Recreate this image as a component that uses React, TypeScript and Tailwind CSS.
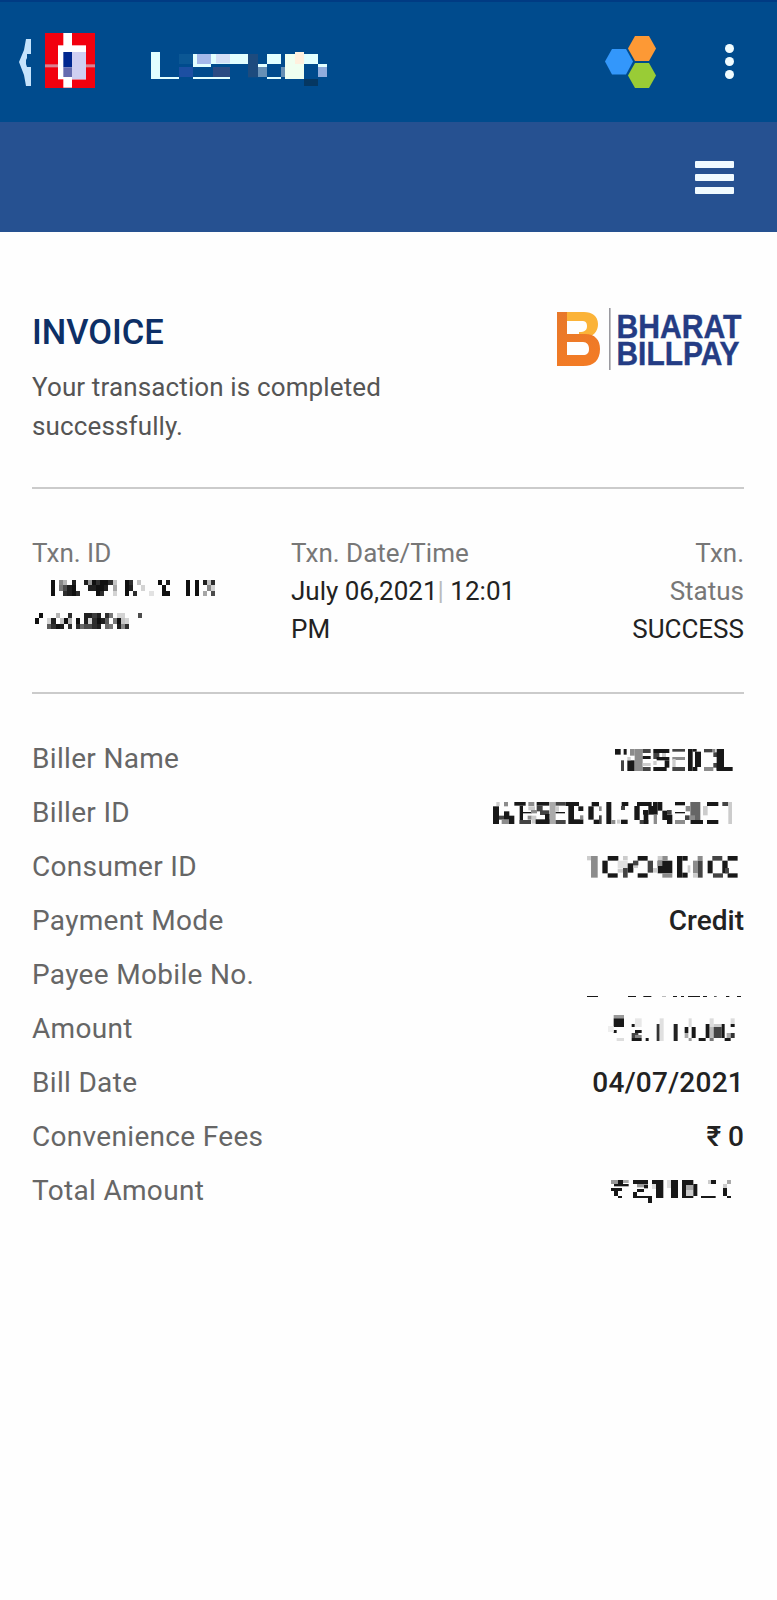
type Rect = [number, number, number, number, string];

function Blocks({ x, y, w, h, rects, className }: { x: number; y: number; w: number; h: number; rects: Rect[]; className?: string }) {
  return (
    <svg width={w / 3} height={h / 3} viewBox={`${x} ${y} ${w} ${h}`} className={className} aria-hidden="true">
      {rects.map(([rx, ry, rw, rh, c], i) => (
        <rect key={i} x={rx} y={ry} width={rw} height={rh} fill={c} />
      ))}
    </svg>
  );
}

/* Each character is one cell: a hex digit is a grey level, a dot is empty. */
function Mosaic({ rows, cw, ch, className }: { rows: string[]; cw: number; ch: number; className?: string }) {
  const cols = Math.max(...rows.map((r) => r.length));
  return (
    <svg width={cols * cw} height={rows.length * ch} className={className} shapeRendering="crispEdges" aria-hidden="true">
      {rows.flatMap((r, j) =>
        r.split("").map((c, i) => {
          if (c === ".") return null;
          const v = 16 + parseInt(c, 16) * 15;
          return <rect key={`${j}-${i}`} x={i * cw} y={j * ch} width={cw} height={ch} fill={`rgb(${v},${v},${v})`} />;
        })
      )}
    </svg>
  );
}

const K = "#181818";
const D = "#444444";
const M = "#8c8c8c";
const L = "#cccccc";
const W = "#e2ffff";

const bankRects: Rect[] = [
  [135, 98, 150, 166, "#f2000e"],
  [135, 192, 150, 9, "#d98291"],
  [190, 98, 26, 164, "#ffffff"],
  [174, 135, 84, 102, "#ffffff"],
  [190, 155, 26, 46, "#00278f"],
  [190, 201, 26, 29, "#656bb0"],
  [216, 155, 42, 82, "#cfcff2"],
];

const titleRects: Rect[] = [
  [453, 156, 27, 81, W],
  [480, 231, 57, 6, W],
  [537, 162, 42, 30, "#0b5794"],
  [537, 201, 42, 30, "#1c4fa2"],
  [579, 162, 165, 30, W],
  [591, 162, 42, 30, "#a5b9ea"],
  [648, 162, 42, 28, "#d5e0f7"],
  [579, 192, 54, 9, W],
  [639, 201, 51, 30, "#2b4b83"],
  [579, 231, 111, 6, W],
  [744, 162, 30, 70, "#1d4b7e"],
  [801, 162, 42, 30, W],
  [774, 192, 27, 9, W],
  [774, 201, 27, 30, "#6790b5"],
  [801, 231, 42, 6, W],
  [843, 201, 12, 30, "#6790b5"],
  [855, 162, 57, 75, "#effff0"],
  [885, 156, 27, 36, "#fff0de"],
  [912, 162, 42, 30, W],
  [954, 192, 27, 9, W],
  [954, 201, 27, 30, "#91acdc"],
  [912, 237, 42, 21, "#053762"],
];

const nameRects: Rect[] = [
  [15, 18, 17, 17, K], [41, 18, 9, 17, K], [60, 18, 14, 20, M], [33, 52, 9, 32, D], [52, 52, 22, 32, K], [52, 42, 10, 10, L],
  [74, 18, 24, 66, M], [98, 18, 24, 12, D], [98, 39, 24, 9, K], [98, 60, 24, 9, L], [98, 72, 24, 12, D],
  [130, 18, 48, 12, K], [130, 30, 18, 18, D], [140, 42, 38, 10, K], [164, 52, 14, 22, K], [130, 72, 40, 12, K], [130, 54, 10, 12, L], [156, 30, 12, 12, L],
  [187, 18, 38, 8, D], [187, 42, 38, 9, M], [187, 72, 38, 12, D], [187, 48, 10, 24, L],
  [234, 18, 14, 66, K], [248, 18, 12, 8, K], [255, 26, 18, 46, K], [248, 72, 14, 12, K],
  [282, 18, 24, 10, D], [306, 18, 10, 10, M], [282, 72, 28, 12, M], [310, 28, 12, 14, D], [310, 60, 12, 14, D],
  [320, 18, 22, 64, K], [320, 72, 48, 12, K],
];

const idRects: Rect[] = [
  [14, 27, 18, 53, K], [32, 55, 15, 12, D], [47, 14, 12, 13, M], [47, 42, 16, 25, K], [40, 67, 22, 13, M], [62, 55, 16, 25, K], [24, 14, 10, 12, L],
  [78, 14, 34, 11, K], [94, 25, 10, 55, K], [104, 44, 26, 4, K], [120, 14, 18, 12, M], [120, 27, 20, 12, L], [118, 55, 12, 12, M], [94, 68, 34, 12, D], [130, 55, 14, 24, L],
  [145, 14, 38, 11, K], [145, 25, 18, 17, D], [155, 39, 28, 14, D], [170, 50, 14, 30, K], [142, 66, 42, 14, K], [128, 38, 18, 10, M],
  [184, 14, 18, 66, "#aaaaaa"], [202, 14, 30, 11, D], [202, 44, 28, 4, K], [202, 68, 30, 12, D], [202, 27, 10, 16, L],
  [232, 14, 40, 12, K], [240, 26, 17, 54, K], [257, 66, 28, 14, K], [270, 27, 15, 14, K], [275, 54, 10, 12, M],
  [310, 14, 22, 13, K], [300, 27, 16, 40, K], [316, 67, 20, 13, K], [332, 27, 8, 14, M], [332, 54, 8, 26, D],
  [354, 14, 15, 66, K], [369, 68, 12, 12, M],
  [400, 14, 20, 12, K], [398, 26, 12, 12, D], [386, 67, 10, 12, L], [398, 67, 20, 13, K],
  [446, 14, 44, 12, K], [438, 26, 16, 42, K], [454, 68, 26, 12, D], [464, 38, 16, 14, K], [480, 26, 14, 26, K], [466, 50, 14, 30, K],
  [494, 14, 14, 38, K], [508, 14, 14, 26, K], [496, 52, 10, 28, M], [522, 40, 14, 28, K], [536, 52, 16, 28, K], [536, 38, 14, 14, D],
  [560, 14, 30, 10, K], [560, 44, 30, 4, K], [560, 68, 30, 12, M], [590, 54, 14, 14, D],
  [606, 14, 30, 66, "#666666"], [592, 26, 14, 16, M], [606, 54, 14, 14, M], [608, 68, 36, 12, K],
  [656, 14, 34, 12, K], [644, 26, 14, 28, L], [656, 68, 34, 12, K],
  [702, 14, 18, 12, D], [720, 14, 12, 66, L],
];

const consumerRects: Rect[] = [
  [-62, 178, 12, 13, L], [-50, 178, 20, 65, M],
  [0, 178, 32, 14, K], [-16, 192, 16, 38, K], [0, 230, 30, 13, K],
  [46, 178, 14, 13, L], [30, 192, 30, 22, "#e0e0e0"], [46, 214, 14, 29, D], [60, 200, 17, 28, K], [77, 192, 14, 22, L], [30, 216, 16, 12, L],
  [90, 178, 30, 14, K], [76, 192, 16, 14, D], [90, 230, 30, 13, K], [120, 192, 16, 36, D],
  [150, 178, 14, 13, L], [164, 178, 16, 13, M], [150, 192, 44, 38, K], [150, 192, 14, 16, M], [164, 230, 30, 13, M], [136, 214, 14, 14, L],
  [208, 178, 16, 65, K], [224, 178, 16, 14, K], [224, 228, 16, 15, K], [240, 206, 8, 22, L],
  [270, 178, 15, 14, M], [256, 192, 14, 38, M], [270, 192, 15, 51, D], [256, 230, 14, 13, L],
  [314, 178, 30, 14, D], [300, 192, 15, 38, K], [316, 230, 30, 13, D], [344, 192, 16, 38, K], [360, 178, 30, 14, K], [352, 214, 12, 16, D], [360, 230, 30, 13, K],
];

const phoneRects: Rect[] = [
  [321, 303, 33, 3, K], [444, 303, 24, 3, K], [490, 303, 24, 3, K], [546, 303, 12, 3, "#bbb"],
  [579, 303, 12, 3, K], [603, 303, 9, 3, K], [624, 303, 36, 3, K], [669, 303, 12, 3, K],
  [702, 303, 8, 3, "#555"], [738, 303, 10, 3, K], [771, 303, 12, 3, K],
];

const amountRects: Rect[] = [
  [402, 351, 31, 10, "#999"], [402, 361, 31, 26, K], [402, 396, 9, 9, K], [385, 384, 17, 18, "#eee"], [411, 420, 22, 9, "#ddd"],
  [466, 361, 20, 26, "#e8e8e8"], [456, 378, 9, 9, K], [466, 396, 20, 9, K], [456, 405, 20, 15, "#444"], [466, 411, 20, 9, "#888"], [456, 420, 30, 9, K],
  [498, 420, 9, 9, K], [531, 378, 9, 51, "#333"], [540, 361, 12, 68, "#e0e0e0"],
  [582, 378, 12, 51, "#222"], [615, 387, 11, 18, K], [615, 405, 11, 15, "#aaa"], [627, 361, 9, 26, "#ddd"], [636, 387, 12, 33, K], [627, 420, 9, 9, "#999"],
  [657, 420, 21, 9, K], [678, 378, 12, 42, K], [690, 361, 12, 26, "#ddd"], [690, 387, 12, 33, "#bbb"], [690, 420, 12, 9, "#777"],
  [702, 387, 24, 33, "#444"], [702, 378, 24, 9, "#ccc"], [726, 378, 9, 42, K], [735, 420, 18, 9, K], [741, 405, 12, 15, "#aaa"], [753, 378, 12, 9, K], [753, 361, 12, 17, "#ddd"], [753, 405, 12, 15, "#333"],
];

const totalRects: Rect[] = [
  [393, 372, 21, 12, "#999"], [402, 384, 44, 7, K], [414, 372, 15, 12, K], [429, 372, 17, 9, "#aaa"], [393, 396, 33, 9, K], [402, 405, 12, 15, K], [414, 420, 12, 6, K],
  [459, 372, 45, 12, K], [471, 384, 33, 10, "#999"], [492, 387, 12, 10, K], [471, 399, 21, 9, K], [459, 408, 12, 12, K], [459, 420, 57, 6, K], [504, 426, 12, 15, K],
  [516, 372, 12, 12, K], [528, 372, 22, 54, K], [516, 384, 12, 15, "#ddd"], [573, 372, 21, 54, K], [561, 372, 12, 24, "#ddd"],
  [606, 372, 12, 54, K], [618, 372, 22, 15, K], [618, 387, 22, 15, "#aaa"], [618, 402, 22, 18, "#ccc"], [618, 420, 22, 6, K], [640, 384, 12, 36, K],
  [663, 420, 44, 6, K], [684, 372, 9, 12, "#ccc"], [693, 372, 15, 12, K], [741, 372, 12, 12, "#aaa"], [729, 384, 12, 36, K], [729, 384, 12, 12, "#ccc"], [741, 420, 12, 6, K],
];

const txnTop = [
  "0.8b.1..1902002c..02.c....0.1....0.0.1c2",
  "0.7410...11001.a..01..d....0.....0.0..8d",
  "0..2102....02..d..0.2...e..00....0.0.a.4",
];
const txnBottom = [
  ".0...b..2...1131.27.dd...4",
  "0..d1.c0b.0.1d2015.70cd...",
  "...5201.2.264421.67.182...",
];

const values = [
  { label: "Biller Name", art: <Blocks x={15} y={18} w={353} h={66} rects={nameRects} className="mt-[1px] mr-[11px]" /> },
  { label: "Biller ID", art: <Blocks x={14} y={14} w={718} h={66} rects={idRects} className="mr-[12px]" /> },
  { label: "Consumer ID", art: <Blocks x={-62} y={178} w={452} h={65} rects={consumerRects} className="mr-[6px]" /> },
  { label: "Payment Mode", text: "Credit", spacing: "tracking-[0px]" },
  { label: "Payee Mobile No.", art: <Blocks x={321} y={303} w={462} h={3} rects={phoneRects} className="mr-[3px] mb-[5px] self-end" /> },
  { label: "Amount", art: <Blocks x={385} y={351} w={380} h={78} rects={amountRects} className="-mt-[2px] mr-[9px]" /> },
  { label: "Bill Date", text: "04/07/2021", spacing: "tracking-[0.25px]" },
  { label: "Convenience Fees", text: "₹ 0", spacing: "tracking-[0px]" },
  { label: "Total Amount", art: <Blocks x={393} y={372} w={360} h={69} rects={totalRects} className="mr-[13px]" /> },
];

function BillPayLogo() {
  return (
    <svg width="190" height="64" viewBox="0 0 190 64" className="overflow-visible" aria-label="Bharat BillPay">
      <defs>
        <linearGradient id="orange" x1="0" y1="0" x2="0.3" y2="1">
          <stop offset="0" stopColor="#e7782b" />
          <stop offset="1" stopColor="#f27b25" />
        </linearGradient>
      </defs>
      <path d="M12 4H29C37 4 43 8 43 16C43 22 40 26 35 29H24V24C30 24 32 22 32 18C32 14 30 13 27 13H12Z" fill="#fbb338" />
      <path d="M2 4H12V26H30C40 26 45 32 45 41C45 52 39 58 28 58H2ZM12 34V47H28C32 47 34 45 34 41C34 37 32 34 28 34Z" fill="url(#orange)" fillRule="evenodd" />
      <rect x="54" y="0" width="1.6" height="62" fill="#9a9aa0" />
      <g fill="#243c84" stroke="#243c84" strokeWidth="0.4" fontFamily="Liberation Sans, sans-serif" fontWeight="700" fontSize="33">
        <text x="61.5" y="30" textLength="125" lengthAdjust="spacingAndGlyphs">BHARAT</text>
        <text x="61.5" y="57" textLength="123" lengthAdjust="spacingAndGlyphs">BILLPAY</text>
      </g>
    </svg>
  );
}

export default function App() {
  return (
    <div className="min-h-[1600px] w-full bg-[#fefefe] font-['Roboto',sans-serif]">
      <header className="flex h-[122px] items-start border-t-2 border-[#003b83] bg-[#004b8d]">
        <svg width="13" height="48" viewBox="0 0 13 48" className="mt-[37px] ml-[18px]" aria-hidden="true">
          <path d="M8 0H13V15H9V19L8 21V25L9 28H13V47H8L6 36L1 23L6 11Z" fill="#c5e3fc" />
        </svg>
        <Blocks x={135} y={98} w={150} h={166} rects={bankRects} className="mt-[31px] ml-[14px]" />
        <Blocks x={453} y={156} w={528} h={102} rects={titleRects} className="mt-[50px] ml-[56px]" />
        <div className="grow" />
        <svg width="52" height="53" viewBox="0 0 52 53" className="mt-[33px]" aria-hidden="true">
          <path d="M7 14H21L28 26.5L21 39.5H7L0 26.5Z" fill="#3397fb" />
          <path d="M30 1H44L51 13.5L44 26H30L23 13.5Z" fill="#fd9935" />
          <path d="M30 28H44L51 40.5L44 53H30L23 40.5Z" fill="#99cc36" />
        </svg>
        <div className="mt-[42px] mr-[43px] ml-[68px] flex flex-col gap-1">
          <span className="size-[9px] rounded-full bg-[#f0fcff]" />
          <span className="size-[9px] rounded-full bg-[#f0fcff]" />
          <span className="size-[9px] rounded-full bg-[#f0fcff]" />
        </div>
      </header>
      <nav className="flex h-[110px] items-center justify-end bg-[#265191] pr-[43px]">
        <div className="flex flex-col gap-[6px]">
          <span className="h-[7px] w-[39px] rounded-[1px] bg-[#f0faff]" />
          <span className="h-[7px] w-[39px] rounded-[1px] bg-[#f0faff]" />
          <span className="h-[7px] w-[39px] rounded-[1px] bg-[#f0faff]" />
        </div>
      </nav>

      <main className="pr-[33px] pl-[32px]">
        <section className="flex h-[257px] justify-between border-b-2 border-[#cbcbcb] pt-[78px]">
          <div className="w-[380px]">
            <h1 className="text-[34.5px] leading-[44px] font-medium text-[#0d2f66]">INVOICE</h1>
            <p className="mt-[14px] text-[26px] leading-[39px] tracking-[0.13px] text-[#555]">Your transaction is completed successfully.</p>
          </div>
          <div className="-mt-[2px] -mr-px">
            <BillPayLogo />
          </div>
        </section>

        <section className="flex h-[205px] border-b-2 border-[#cbcbcb] pt-[45px] text-[26px] leading-[38px] text-[#222]">
          <div className="w-[259px]">
            <div className="text-[#777]">Txn. ID</div>
            <Mosaic rows={txnTop} cw={4.1} ch={5.3} className="mt-[8px] ml-[19px]" />
            <Mosaic rows={txnBottom} cw={4.1} ch={5.3} className="mt-[17px] ml-[3px]" />
          </div>
          <div className="w-[240px]">
            <div className="text-[#777]">Txn. Date/Time</div>
            <div>
              July 06,2021<span className="text-[#bbb]">|</span> 12:01
              <br />
              PM
            </div>
          </div>
          <div className="grow text-right">
            <div className="text-[#777]">
              Txn.
              <br />
              Status
            </div>
            <div>SUCCESS</div>
          </div>
        </section>

        <section className="mt-[38px]">
          {values.map((v) => (
            <div key={v.label} className="flex h-[54px] items-center justify-between text-[28px] leading-[54px]">
              <span className="tracking-[0.32px] text-[#666]">{v.label}</span>
              {v.art ?? <span className={`font-medium text-[#222] ${v.spacing}`}>{v.text}</span>}
            </div>
          ))}
        </section>
      </main>
    </div>
  );
}
